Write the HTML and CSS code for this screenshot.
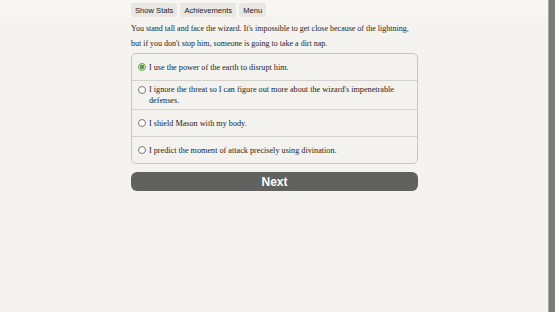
FILE: index.html
```html
<!DOCTYPE html>
<html lang="en">
<head>
  <meta charset="UTF-8" />
  <title>Choice</title>
  <link rel="stylesheet" href="styles.css">
</head>
<body>
  <div class="page">
    <div class="main">
      <div class="header">
        <div class="container buttons">
          <button class="top-btn">Show Stats</button>
          <button class="top-btn">Achievements</button>
          <button class="top-btn">Menu</button>
        </div>
      </div>
      <div class="container">
        <p class="story">You stand tall and face the wizard. It's impossible to get close because of the lightning, but if you don't stop him, someone is going to take a dirt nap.</p>
        <form class="choices">
          <label class="choice"><span class="choice-inner"><input type="radio" name="choice" checked /><span>I use the power of the earth to disrupt him.</span></span></label>
          <label class="choice"><span class="choice-inner"><input type="radio" name="choice" /><span>I ignore the threat so I can figure out more about the wizard's impenetrable defenses.</span></span></label>
          <label class="choice"><span class="choice-inner"><input type="radio" name="choice" /><span>I shield Mason with my body.</span></span></label>
          <label class="choice"><span class="choice-inner"><input type="radio" name="choice" /><span>I predict the moment of attack precisely using divination.</span></span></label>
        </form>
        <button class="next-btn">Next</button>
      </div>
    </div>
    <div class="scrollbar"></div>
  </div>
</body>
</html>
```

FILE: styles.css
```css
body {
  margin: 0;
  background-color: #f4f3ef;
  font-family: 'Liberation Serif', serif;
  color: #1e1e1e;
}
.page {
  display: flex;
  height: 312px;
}
.main {
  flex: 1;
}
.scrollbar {
  width: 6px;
  background-color: #7b7b76;
  border-left: 1px solid #a8a8a2;
}
.header {
  background-color: #f7f6f2;
  padding-top: 3px;
  height: 17px;
  box-sizing: border-box;
}
.container {
  width: 287px;
  margin-left: 131px;
}
.buttons {
  display: flex;
  gap: 3px;
}
.top-btn {
  font-family: 'Liberation Sans', sans-serif;
  font-size: 7.6px;
  color: #222;
  background-color: #e9e7e2;
  border: none;
  border-radius: 2px;
  padding: 0 4px;
  height: 14px;
}
.story {
  font-size: 8px;
  line-height: 15px;
  margin: 4px 0 2px 0;
}
.choices {
  border: 1px solid #c9c7c1;
  border-radius: 5px;
  background-color: #f3f2ee;
  display: flex;
  flex-direction: column;
}
.choice {
  display: flex;
  align-items: center;
  box-sizing: border-box;
  min-height: 27px;
  font-size: 8.2px;
  line-height: 11px;
  padding: 3px 6px 3px 5px;
  border-top: 1px solid #d3d1cb;
}
.choice:first-child {
  border-top: none;
  min-height: 26px;
}
.choice-inner {
  display: flex;
  align-items: flex-start;
}
.choice input {
  margin: 1.5px 3px 0 1px;
  width: 8px;
  height: 8px;
  flex-shrink: 0;
  accent-color: #5e9b4c;
}
.next-btn {
  display: block;
  width: 100%;
  margin-top: 8px;
  height: 19px;
  background-color: #616160;
  color: white;
  border: none;
  border-radius: 6px;
  font-family: 'Liberation Sans', sans-serif;
  font-weight: bold;
  font-size: 12px;
}
```
